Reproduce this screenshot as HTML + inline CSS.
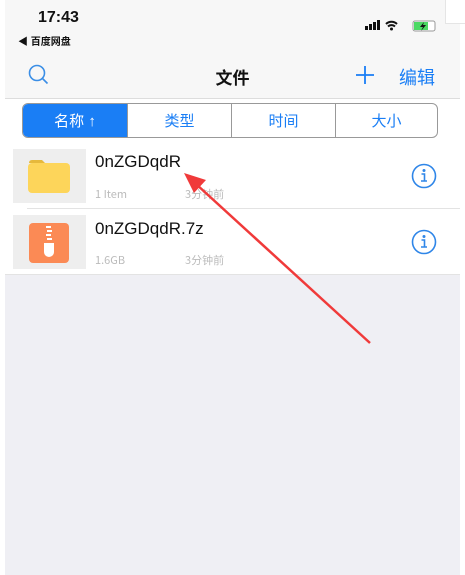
<!DOCTYPE html>
<html><head><meta charset="utf-8"><style>
*{margin:0;padding:0;box-sizing:border-box}
body{width:465px;height:575px;background:#fff;font-family:"Liberation Sans","Noto Sans CJK SC",sans-serif;position:relative;overflow:hidden}
.abs{position:absolute}
.sub{font-size:11px;line-height:14px;color:#bbb;font-family:"Noto Sans CJK SC",sans-serif}
</style></head><body>
<div class="abs" style="left:5px;top:0;width:455px;height:99px;background:#f7f7f7;border-bottom:1px solid #ddd"></div>
<div class="abs" style="left:445px;top:0;width:20px;height:24px;background:#fff;border-left:1px solid #e5e5e5;border-bottom:1px solid #e5e5e5"></div>
<div class="abs" style="left:38px;top:9px;font-size:16px;font-weight:bold;color:#111">17:43</div>
<div class="abs" style="left:18px;top:33px;font-size:10px;font-weight:bold;color:#111">◀ 百度网盘</div>
<svg class="abs" style="left:365px;top:19px" width="75" height="14">
<rect x="0" y="7" width="3" height="4" fill="#111"/><rect x="4" y="5" width="3" height="6" fill="#111"/><rect x="8" y="3" width="3" height="8" fill="#111"/><rect x="12" y="1" width="3" height="10" fill="#111"/>
<path d="M21 5a8 8 0 0 1 11 0M23 7.5a5 5 0 0 1 7 0" stroke="#111" stroke-width="2" fill="none"/><circle cx="26.5" cy="10" r="1.5" fill="#111"/>
<rect x="48" y="2" width="22" height="10" rx="2" fill="#fff" stroke="#999"/><rect x="49" y="3" width="14" height="8" fill="#4cd964"/><path d="M59 3l-4 5h3l-2 4 5-6h-3z" fill="#111"/>
</svg>
<svg class="abs" style="left:28px;top:64px" width="22" height="22"><circle cx="9" cy="9" r="7.5" stroke="#3a8ee6" stroke-width="1.6" fill="none"/><path d="M14.5 14.5l5 5" stroke="#3a8ee6" stroke-width="1.6"/></svg>
<div class="abs" style="left:0;width:465px;top:64px;text-align:center;font-size:17px;font-weight:bold;color:#111">文件</div>
<svg class="abs" style="left:355px;top:65px" width="20" height="20"><path d="M10 1v18M1 10h18" stroke="#1a7ef5" stroke-width="1.8"/></svg>
<div class="abs" style="left:399px;top:64px;font-size:18px;color:#1a7ef5">编辑</div>
<div class="abs" style="left:22px;top:103px;width:416px;height:35px;border:1px solid #999;border-radius:6px;display:flex;overflow:hidden;font-size:15px;color:#1a7ef5">
<div style="width:104px;background:#1a7ef5;color:#fff;display:flex;align-items:center;justify-content:center">名称 ↑</div>
<div style="width:104px;border-left:1px solid #999;display:flex;align-items:center;justify-content:center">类型</div>
<div style="width:104px;border-left:1px solid #999;display:flex;align-items:center;justify-content:center">时间</div>
<div style="flex:1;border-left:1px solid #999;display:flex;align-items:center;justify-content:center">大小</div>
</div>
<div class="abs" style="left:27px;top:208px;width:433px;height:1px;background:#e3e3e3"></div>
<div class="abs" style="left:5px;top:274px;width:455px;height:301px;background:#efeff4;border-top:1px solid #e3e3e3"></div>
<div class="abs" style="left:13px;top:149px;width:73px;height:54px;background:#eeeeee"></div>
<div class="abs" style="left:13px;top:215px;width:73px;height:54px;background:#eeeeee"></div>
<svg class="abs" style="left:27px;top:157px" width="44" height="38"><path d="M2 6q0-3 3-3h10l3 3h-16z" fill="#e6b93c"/><rect x="1" y="6" width="42" height="30" rx="4" fill="#fdd55a"/></svg>
<svg class="abs" style="left:28px;top:222px" width="42" height="42"><rect x="1" y="1" width="40" height="40" rx="4" fill="#fb8a55"/><rect x="18" y="4" width="5" height="2" fill="#fff"/><rect x="19" y="8" width="5" height="2" fill="#fff"/><rect x="18" y="12" width="5" height="2" fill="#fff"/><rect x="19" y="16" width="5" height="2" fill="#fff"/><path d="M16 21h10v9a5 5 0 0 1-10 0z" fill="#fff"/></svg>
<div class="abs" style="left:95px;top:152px;font-size:17px;color:#111">0nZGDqdR</div>
<div class="abs sub" style="left:95px;top:187px">1 Item</div>
<div class="abs sub" style="left:185px;top:187px">3分钟前</div>
<div class="abs" style="left:95px;top:219px;font-size:17px;color:#111">0nZGDqdR.7z</div>
<div class="abs sub" style="left:95px;top:253px">1.6GB</div>
<div class="abs sub" style="left:185px;top:253px">3分钟前</div>
<svg class="abs" style="left:411px;top:163px" width="26" height="26"><circle cx="13" cy="13" r="11.5" stroke="#2f86e8" stroke-width="1.6" fill="none"/><circle cx="13" cy="7.5" r="1.5" fill="#2f86e8"/><path d="M10.5 11h3v7M10 18h6" stroke="#2f86e8" stroke-width="1.6" fill="none"/></svg>
<svg class="abs" style="left:411px;top:229px" width="26" height="26"><circle cx="13" cy="13" r="11.5" stroke="#2f86e8" stroke-width="1.6" fill="none"/><circle cx="13" cy="7.5" r="1.5" fill="#2f86e8"/><path d="M10.5 11h3v7M10 18h6" stroke="#2f86e8" stroke-width="1.6" fill="none"/></svg>
<svg class="abs" style="left:0;top:0" width="465" height="575"><path d="M370 343L196 184" stroke="#f03a3a" stroke-width="2.5"/><path d="M184 173L206 180L194 193z" fill="#f03a3a"/></svg>
</body></html>
